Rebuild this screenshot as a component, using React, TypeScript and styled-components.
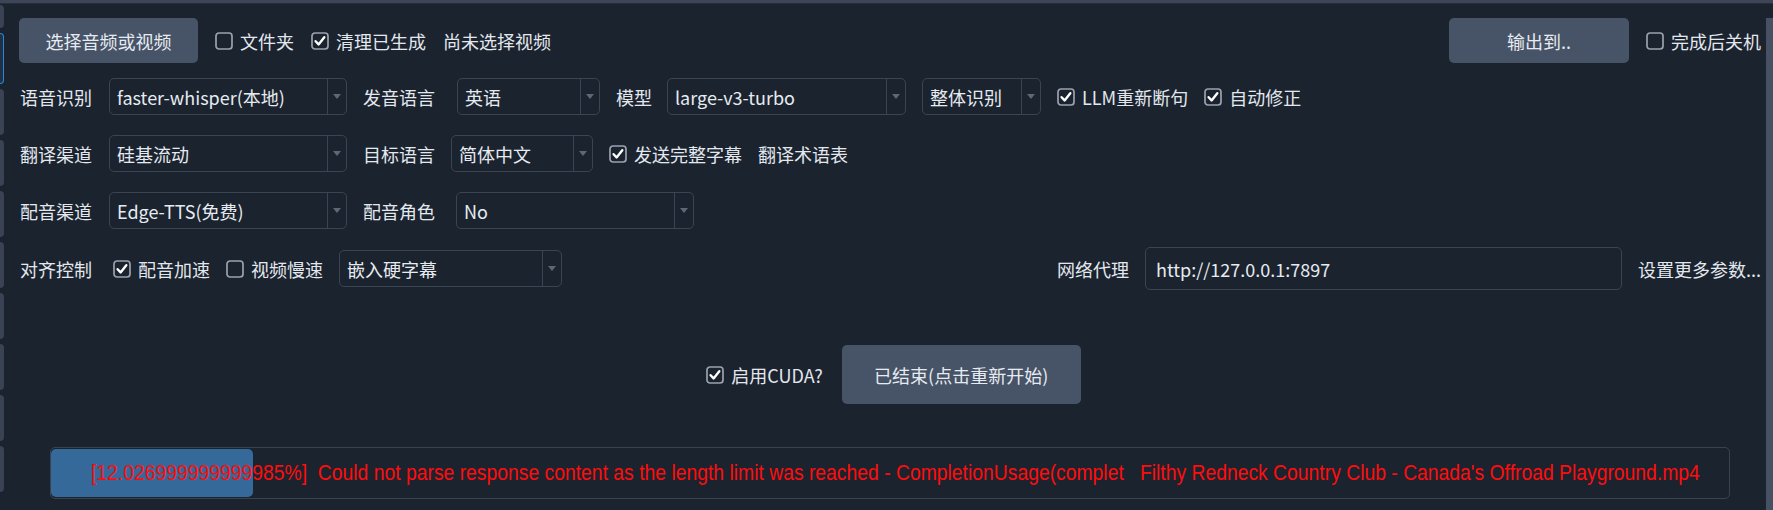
import React, { useLayoutEffect, useRef, useState } from "react";
import styled, { createGlobalStyle } from "styled-components";

const GlobalStyle = createGlobalStyle`
  html, body { margin: 0; padding: 0; background: #1b232e; }
  body {
    font-family: "Noto Sans CJK SC", "Noto Sans", sans-serif;
    color: #e3e8ee;
    -webkit-font-smoothing: antialiased;
  }
`;

const Page = styled.div`
  width: 1773px;
  height: 510px;
  display: flex;
  flex-direction: column;
  overflow: hidden;
  background: #1b232e;
`;

const TopBar = styled.div`
  height: 3px;
  flex: none;
  background: #3c4657;
  border-bottom: 1px solid #262e39;
`;

const Body = styled.div`
  flex: 1;
  display: flex;
  min-height: 0;
`;

const LeftRail = styled.div`
  width: 4px;
  flex: none;
  display: flex;
  flex-direction: column;
  gap: 5px;
  padding-top: 1px;
`;

const RailTab = styled.div<{ $h: number; $active?: boolean }>`
  height: ${(p) => p.$h}px;
  flex: none;
  box-sizing: border-box;
  border-radius: 0 4px 4px 0;
  background: ${(p) => (p.$active ? "#243040" : "#3a4353")};
  border: ${(p) => (p.$active ? "1.5px solid #1f8ae6" : "none")};
  border-left: none;
`;

const RightRail = styled.div`
  width: 7px;
  flex: none;
  margin-top: 14px;
  background: #465163;
`;

const Main = styled.div`
  flex: 1;
  display: flex;
  flex-direction: column;
  min-width: 0;
`;

const Row = styled.div<{ $mt: number; $h: number; $gap?: number; $pl?: number; $center?: boolean }>`
  display: flex;
  align-items: center;
  justify-content: ${(p) => (p.$center ? "center" : "flex-start")};
  margin-top: ${(p) => p.$mt}px;
  height: ${(p) => p.$h}px;
  gap: ${(p) => p.$gap ?? 16}px;
  padding-left: ${(p) => p.$pl ?? 16}px;
  padding-right: 5px;
  flex: none;
`;

const Spacer = styled.div`
  flex: 1;
`;

const Button = styled.div<{ $w: number; $h: number }>`
  width: ${(p) => p.$w}px;
  height: ${(p) => p.$h}px;
  flex: none;
  display: flex;
  align-items: center;
  justify-content: center;
  background: #475366;
  border-radius: 5px;
  font-size: 18px;
  color: #e6ebf1;
`;

const Label = styled.div<{ $w?: number }>`
  ${(p) => (p.$w ? `width: ${p.$w}px;` : "")}
  flex: none;
  font-size: 18px;
  line-height: 1;
  white-space: nowrap;
  color: #e3e8ee;
`;

const CheckWrap = styled.div`
  display: flex;
  align-items: center;
  gap: 7px;
  flex: none;
  font-size: 18px;
  line-height: 1;
  white-space: nowrap;
`;

const BoxSvg = styled.svg`
  width: 18px;
  height: 18px;
  flex: none;
  display: block;
`;

const CheckBox = ({ checked }: { checked?: boolean }) => (
  <BoxSvg viewBox="0 0 18 18">
    <rect x="1" y="1" width="16" height="16" rx="3" ry="3" fill="none" stroke="#9aa2ad" strokeWidth="1.7" />
    {checked && (
      <path d="M4.6 9.2 L7.6 12.4 L13.3 5.2" fill="none" stroke="#ffffff" strokeWidth="2.4" strokeLinecap="round" strokeLinejoin="round" />
    )}
  </BoxSvg>
);

const Check = ({ checked, children }: { checked?: boolean; children: React.ReactNode }) => (
  <CheckWrap>
    <CheckBox checked={checked} />
    <span>{children}</span>
  </CheckWrap>
);

const ComboBox = styled.div<{ $w: number }>`
  width: ${(p) => p.$w}px;
  height: 37px;
  flex: none;
  box-sizing: border-box;
  display: flex;
  border: 1px solid #3a4453;
  border-radius: 5px;
  overflow: hidden;
`;

const ComboText = styled.div`
  flex: 1;
  display: flex;
  align-items: center;
  padding-left: 7px;
  font-size: 18px;
  white-space: nowrap;
  overflow: hidden;
  color: #e6ebf1;
`;

const ArrowBox = styled.div`
  width: 18px;
  flex: none;
  border-left: 1px solid #3a4453;
  display: flex;
  align-items: center;
  justify-content: center;
`;

const Triangle = styled.div`
  width: 0;
  height: 0;
  border-left: 4px solid transparent;
  border-right: 4px solid transparent;
  border-top: 5px solid #5d6877;
`;

const Combo = ({ w, value }: { w: number; value: string }) => (
  <ComboBox $w={w}>
    <ComboText>{value}</ComboText>
    <ArrowBox>
      <Triangle />
    </ArrowBox>
  </ComboBox>
);

const TextField = styled.div`
  width: 477px;
  height: 43px;
  flex: none;
  box-sizing: border-box;
  border: 1px solid #3a4453;
  border-radius: 5px;
  display: flex;
  align-items: center;
  padding-left: 10px;
  font-size: 18px;
  color: #e6ebf1;
`;

const ProgressOuter = styled.div`
  position: relative;
  margin: 43px 36px 0 46px;
  height: 52px;
  flex: none;
  box-sizing: border-box;
  border: 1px solid #39424f;
  border-radius: 5px;
  display: flex;
  align-items: center;
  justify-content: center;
  overflow: hidden;
`;

const ProgressChunk = styled.div`
  position: absolute;
  left: 0;
  top: 1px;
  bottom: 1px;
  background: #35699a;
  border-radius: 5px;
`;

const ProgressText = styled.div`
  position: relative;
  flex: none;
  font-family: "Liberation Sans", Arial, sans-serif;
  font-size: 22px;
  color: #ff0d0d;
  white-space: pre;
  margin-left: 10px;
  transform-origin: center center;
`;

const railTabs = [
  { h: 23 },
  { h: 51, active: true },
  { h: 46 },
  { h: 46 },
  { h: 46 },
  { h: 46 },
  { h: 46 },
  { h: 46 },
  { h: 46 },
  { h: 46 },
];

const TARGET_TEXT_WIDTH = 1609;

export default function App() {
  const progress = 12.026999999999985;
  const textRef = useRef<HTMLDivElement>(null);
  const [scale, setScale] = useState(1);
  useLayoutEffect(() => {
    if (textRef.current) {
      const w = textRef.current.offsetWidth;
      if (w > 0) setScale(TARGET_TEXT_WIDTH / w);
    }
  }, []);
  return (
    <>
      <GlobalStyle />
      <Page>
        <TopBar />
        <Body>
          <LeftRail>
            {railTabs.map((t, i) => (
              <RailTab key={i} $h={t.h} $active={t.active} />
            ))}
          </LeftRail>
          <Main>
            <Row $mt={14} $h={45} $pl={15} $gap={17}>
              <Button $w={179} $h={45}>选择音频或视频</Button>
              <Check>文件夹</Check>
              <Check checked>清理已生成</Check>
              <Label>尚未选择视频</Label>
              <Spacer />
              <Button $w={180} $h={45}>输出到..</Button>
              <Check>完成后关机</Check>
            </Row>

            <Row $mt={15} $h={37}>
              <Label $w={73}>语音识别</Label>
              <Combo w={238} value="faster-whisper(本地)" />
              <Label $w={78}>发音语言</Label>
              <Combo w={143} value="英语" />
              <Label $w={35}>模型</Label>
              <Combo w={239} value="large-v3-turbo" />
              <Combo w={119} value="整体识别" />
              <Check checked>LLM重新断句</Check>
              <Check checked>自动修正</Check>
            </Row>

            <Row $mt={20} $h={37}>
              <Label $w={73}>翻译渠道</Label>
              <Combo w={238} value="硅基流动" />
              <Label $w={72}>目标语言</Label>
              <Combo w={142} value="简体中文" />
              <Check checked>发送完整字幕</Check>
              <Label>翻译术语表</Label>
            </Row>

            <Row $mt={20} $h={37}>
              <Label $w={73}>配音渠道</Label>
              <Combo w={238} value="Edge-TTS(免费)" />
              <Label $w={77}>配音角色</Label>
              <Combo w={238} value="No" />
            </Row>

            <Row $mt={18} $h={43}>
              <Label $w={77}>对齐控制</Label>
              <Check checked>配音加速</Check>
              <Check>视频慢速</Check>
              <Combo w={223} value="嵌入硬字幕" />
              <Spacer />
              <Label>网络代理</Label>
              <TextField>http://127.0.0.1:7897</TextField>
              <Label>设置更多参数...</Label>
            </Row>

            <Row $mt={55} $h={59} $gap={19} $center $pl={22}>
              <Check checked>启用CUDA?</Check>
              <Button $w={239} $h={59}>已结束(点击重新开始)</Button>
            </Row>

            <ProgressOuter>
              <ProgressChunk style={{ width: `${progress}%` }} />
              <ProgressText ref={textRef} style={{ transform: `scaleX(${scale})` }}>
                {`[${progress}%]  Could not parse response content as the length limit was reached - CompletionUsage(complet   Filthy Redneck Country Club - Canada's Offroad Playground.mp4`}
              </ProgressText>
            </ProgressOuter>
          </Main>
          <RightRail />
        </Body>
      </Page>
    </>
  );
}
